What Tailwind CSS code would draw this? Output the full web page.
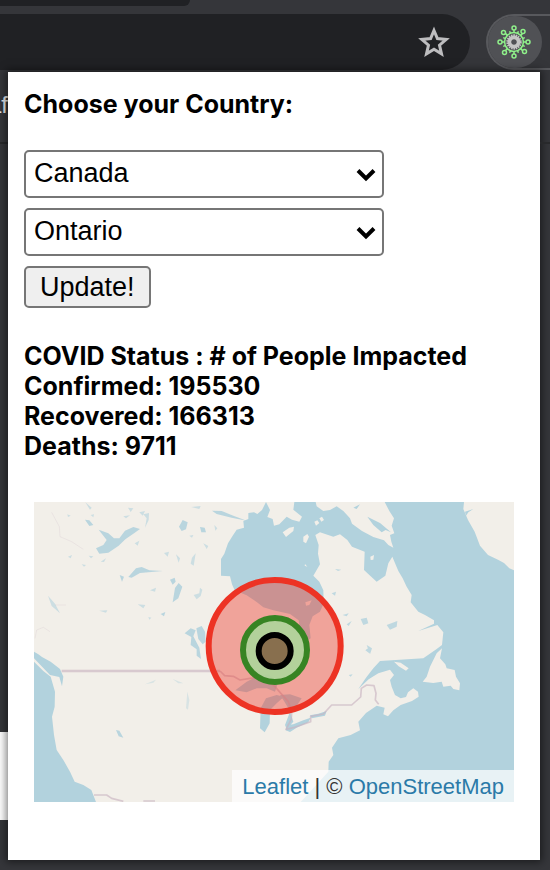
<!DOCTYPE html>
<html lang="en">
<head>
<meta charset="utf-8">
<meta name="viewport" content="width=device-width, initial-scale=1">
<title>COVID Tracker</title>
<script src="https://cdn.jsdelivr.net/npm/@tailwindcss/browser@4"></script>
</head>
<body class="flex min-h-screen flex-col overflow-x-hidden bg-[#35363a] font-['Inter',sans-serif] text-black">
<header>
  <div class="h-[6px] w-[190px] rounded-br-[14px] bg-[#202124]"></div>
  <div class="flex gap-4 pt-2 pb-[2px]">
    <div class="flex h-14 flex-1 items-center justify-end rounded-r-full bg-[#202124] pr-[18px]">
      <button aria-label="Bookmark this tab" class="size-9">
        <svg viewBox="0 0 36 36" class="size-9" fill="none" stroke="#bdbdbf" stroke-width="3"><path d="M18 6.5l3.4 8.1 8.8.8-6.7 5.8 2 8.6-7.500-4.600-7.500 4.600 2-8.600-6.700-5.800 8.800-.8z"/></svg>
      </button>
    </div>
    <div class="h-14 w-16 rounded-l-full border-2 border-r-0 border-[#58595d]">
      <button aria-label="COVID Tracker extension" class="flex h-full w-[54px] items-center justify-center rounded-full bg-[#505155] pr-[2px]">
        <svg viewBox="-17 -17 34 34" class="size-[34px]" fill="none" stroke="#8ff08a" stroke-width="1.5">
          <circle r="9.4"/>
          <path d="M0-9v-3M0 9v3M-9 0h-3M9 0h3M-6.4-6.4l-2-2M6.4-6.4l2-2M-6.4 6.4l-2 2M6.4 6.4l2 2"/>
          <circle cy="-14" r="2"/><circle cy="14" r="2"/><circle cx="-14" r="2"/><circle cx="14" r="2"/>
          <circle cx="-10.500" cy="-9.500" r="2"/><circle cx="9" cy="-10.500" r="2"/><circle cx="-9.500" cy="10.500" r="2"/><circle cx="10.500" cy="9.500" r="2"/>
          <path d="M-3.4-8.3l-1-2.5M3.4-8.3l1-2.5M-3.4 8.3l-1 2.5M3.4 8.3l1 2.5M-8.3-3.4l-2.5-1M8.3-3.4l2.5-1M-8.3 3.4l-2.5 1M8.3 3.4l2.5 1"/>
          <circle r="6.800" stroke="#c4c4c4" stroke-width="1.800" stroke-dasharray="1.5 .9"/>
          <circle r="4.600" stroke="#c4c4c4" stroke-width="3.600"/>
        </svg>
      </button>
    </div>
  </div>
</header>

<main class="grid flex-1 grid-cols-[8px_minmax(0,1fr)_10px]">
  <div class="flex flex-col">
    <div class="flex h-[72px] items-center justify-end border-b-2 border-[#28292b] pb-1 font-['Liberation_Sans',sans-serif] text-2xl text-[#e8eaed]">af</div>
    <div class="h-[588px]"></div>
    <div class="h-[88px] bg-white"></div>
  </div>

  <section class="mb-[10px] bg-white px-4 pt-[17px] shadow-[0_0_8px_2px_rgba(0,0,0,0.5)]">
    <h1 class="text-[25px] leading-[30px] font-bold">Choose your Country:</h1>
    <form class="mt-[31px] flex flex-col items-start gap-[10px] font-['Liberation_Sans',sans-serif] text-[27px]" onsubmit="return false">
      <div class="relative w-[360px] max-w-full">
        <select aria-label="Country" class="h-12 w-full appearance-none rounded-[5px] border-2 border-[#767676] bg-white pr-10 pb-[2px] pl-2"><option>Canada</option></select>
        <svg viewBox="0 0 20 14" class="pointer-events-none absolute top-[18px] right-2 h-[14px] w-5" fill="none" stroke="#000" stroke-width="4"><path d="M2 2.500l8 8 8-8"/></svg>
      </div>
      <div class="relative w-[360px] max-w-full">
        <select aria-label="Province" class="h-12 w-full appearance-none rounded-[5px] border-2 border-[#767676] bg-white pr-10 pb-[2px] pl-2"><option>Ontario</option></select>
        <svg viewBox="0 0 20 14" class="pointer-events-none absolute top-[18px] right-2 h-[14px] w-5" fill="none" stroke="#000" stroke-width="4"><path d="M2 2.500l8 8 8-8"/></svg>
      </div>
      <button class="h-[42px] rounded-[5px] border-2 border-[#767676] bg-[#efefef] px-[14px] leading-[38px]">Update!</button>
    </form>

    <div class="mt-[33px] text-[25px] leading-[30px] font-bold">
      <p>COVID Status : # of People Impacted</p>
      <p>Confirmed: 195530</p>
      <p>Recovered: 166313</p>
      <p>Deaths: 9711</p>
    </div>

    <div class="relative mx-[10px] mt-[41px]">
      <svg viewBox="12 21 1440 900" class="block w-full bg-[#f2efe9]" role="img" aria-label="Map of North America with case circles over Ontario">
        <g fill="#b2d2dd" stroke="none">
          <!-- Hudson Bay, Labrador Sea and Atlantic -->
          <path d="M708 21L696 45 682 57 672 52 655 54 655 72 640 78 642 98 620 104 608 122 594 145 583 176 573 192 573 242 600 244 606 268 614 286 650 301 680 321 700 337 730 346 780 357 806 376 811 410 830 438 842 430 838 390 848 364 870 350 881 325 880 286 868 260 850 242 870 208 864 176 866 150 856 120 870 112 910 125 930 118 952 135 966 155 1004 170 1002 225 1018 240 1040 260 1066 242 1075 205 1087 185 1105 228 1118 250 1130 275 1145 300 1142 322 1165 350 1185 360 1212 376 1212 386 1165 408 1222 390 1240 412 1236 450 1220 462 1180 490 1050 498 1030 520 1008 548 985 582 1016 553 1045 535 1080 524 1092 540 1080 555 1085 575 1095 600 1112 610 1128 606 1134 592 1150 580 1164 590 1166 605 1146 618 1112 630 1090 646 1074 664 1060 658 1064 638 1040 632 1008 654 985 680 990 706 962 720 925 730 906 758 910 780 896 800 895 830 850 880 812 921H1452V226L1438 220 1422 204 1404 194 1374 180 1350 152 1334 110 1314 75 1300 42 1302 21H1064L1078 48 1092 70 1085 92 1093 115 1080 120 1084 140 1090 158 1075 150 1062 136 1030 126 996 108 966 86 960 70 940 48 920 34 900 45 880 48 860 34 857 21H793L790 44 816 65 808 80 786 74 770 65 748 88 732 92 728 72 712 66 720 45Z"/>
          <!-- Pacific -->
          <path d="M12 470L25 478 36 486 62 500 90 522 100 545 96 574 88 546 60 540 12 490zM12 500L40 528 62 545 75 590 74 635 66 665 72 720 80 765 100 795 120 830 134 860 160 870 184 885 198 921H12z"/>
          <!-- Northern lakes -->
          <path fill-opacity=".9" d="M206 104L235 115 252 130 268 130 285 107 310 96 330 102 310 116 286 133 266 152 235 173 208 176 198 160 220 150 230 135zM295 246L318 220 335 216 358 226 398 228 355 232 330 234 305 248zM165 74L178 76 190 90 178 93zM447 95L458 75 473 82 468 103 455 108zM510 96L524 98 528 112 514 112zM546 47L575 48 610 62 650 77 605 68 560 57zM435 279L446 264 457 275 445 310 428 322zM499 400L515 393 525 410 527 440 518 448 505 432zM464 415L482 400 497 406 490 424 508 458 513 492 500 482 500 463 482 450 484 426zM420 254L434 248 437 260 428 269zM392 357L406 351 402 364zM269 240L282 245 276 260zM258 705L268 707 280 728 266 724z"/>
          <path fill-opacity=".6" d="M345 98L356 75 357 54 340 58 350 70zM491 300L508 295 510 278 517 284 512 303 500 313zM360 286L378 278 375 290zM323 328L346 330 340 340zM208 347L232 346 228 353zM54 302L75 326 90 355 65 333zM438 178L450 190 446 203zM486 188L497 175 491 212 482 206zM402 174L417 170 413 185zM484 36L512 33 508 42zM294 38L310 40 302 51zM280 64L300 61 288 70zM328 52L345 48 338 62zM314 145L328 137 323 152zM112 58L122 62 114 66zM166 22L185 38 180 44zM114 185L126 180 122 190zM520 145L535 153 530 162zM553 90L562 100 556 107zM212 200L228 190 222 201zM176 182L190 184 183 190zM182 60L192 58 190 67zM478 122L490 120 486 128zM155 208L168 210 162 215zM355 366L364 368 358 374z"/>
          <path fill-opacity=".4" d="M345 568L378 554 370 563zM428 552L460 565 445 565zM472 590L478 615 474 644 468 640z"/>
          <!-- Great Lakes -->
          <path d="M616 586L650 560 690 540 715 538 745 560 735 590 710 580 680 580 650 592zM692 640L708 610 740 600 762 605 740 625 720 645 719 685 704 712 690 700zM750 600L780 598 815 610 800 632 775 640 762 618zM780 650L790 680 770 702 765 690zM770 690L790 688 820 676 842 668 835 682 800 698 780 711 767 706zM840 661L865 656 890 648 885 662 845 670z"/>
          <path fill-opacity=".8" d="M905 295L918 290 915 302zM938 360L956 355 950 364zM992 372L1010 368 1015 385 1000 390zM1070 390L1102 378 1100 395 1080 404zM950 388L965 378 956 393zM1010 450L1026 460 1020 478zM915 222L934 224 924 228zM956 540L968 538 962 545zM1006 466L1020 455 1018 475zM918 400L930 405 922 410z"/>
        </g>
        <g fill="#f2efe9">
          <path d="M758 112L778 98 792 95 790 108 768 126zM820 125L832 117 837 125 828 145 820 140zM853 80L862 76 868 84 858 92zM868 70L876 65 882 75 874 80zM1021 185L1032 180 1030 194 1022 195zM825 207L832 215 824 212z"/>
          <path d="M826 322L845 316 838 330 828 332z"/>
          <path d="M1092 500L1112 503 1136 520 1128 527 1106 514zM1236 460L1230 490 1246 508 1250 520 1274 525 1278 545 1290 565 1288 586 1270 582 1262 572 1240 575 1235 560 1210 564 1178 560 1190 545 1200 515 1220 475z"/>
        </g>
        <g fill="#b2d2dd"><path d="M1012 65L1050 84 1083 112 1067 105 1055 112 1030 90zM970 38L990 28 980 42zM1305 50L1330 42 1315 52 1308 62z"/></g>
        <g fill="none" stroke="#c9b3c2" stroke-width="5" stroke-opacity=".65" stroke-linejoin="round">
          <path stroke-width="7" d="M95 528H570"/>
          <path d="M570 528L584 542 610 544 630 555 660 550 700 546 735 575 750 592 775 620 785 650 784 672 768 703 790 698 842 680 842 664 880 657 905 630H965L992 606 994 580 1010 570 1032 572 1038 595 1036 615 1046 628M192 900H230L245 910 280 919M340 918H375"/>
          <path stroke-width="2" stroke-opacity=".3" d="M65 52L88 95 90 125 125 140 160 163M75 330H108M15 430L20 405 40 397 60 410"/>
        </g>
        <g stroke-width="18">
          <circle cx="734" cy="453" r="198" fill="#ed3324" fill-opacity=".4" stroke="#ed3324"/>
          <circle cx="735" cy="465" r="96" fill="#aed59b" fill-opacity=".92" stroke="#378423"/>
          <circle cx="734" cy="468" r="48" fill="#886f4e" stroke="#000"/>
        </g>
      </svg>
      <div class="absolute right-0 bottom-0 bg-white/70 px-[10px] pt-[2px] font-['Liberation_Sans',sans-serif] text-[22px] leading-[30px] text-[#333]"><a href="#" class="text-[#2b7aa8]">Leaflet</a> | © <a href="#" class="text-[#2b7aa8]">OpenStreetMap</a></div>
    </div>
  </section>

  <div class="pt-[70px]"><div class="h-[2px] bg-[#28292b]"></div></div>
</main>
</body>
</html>
